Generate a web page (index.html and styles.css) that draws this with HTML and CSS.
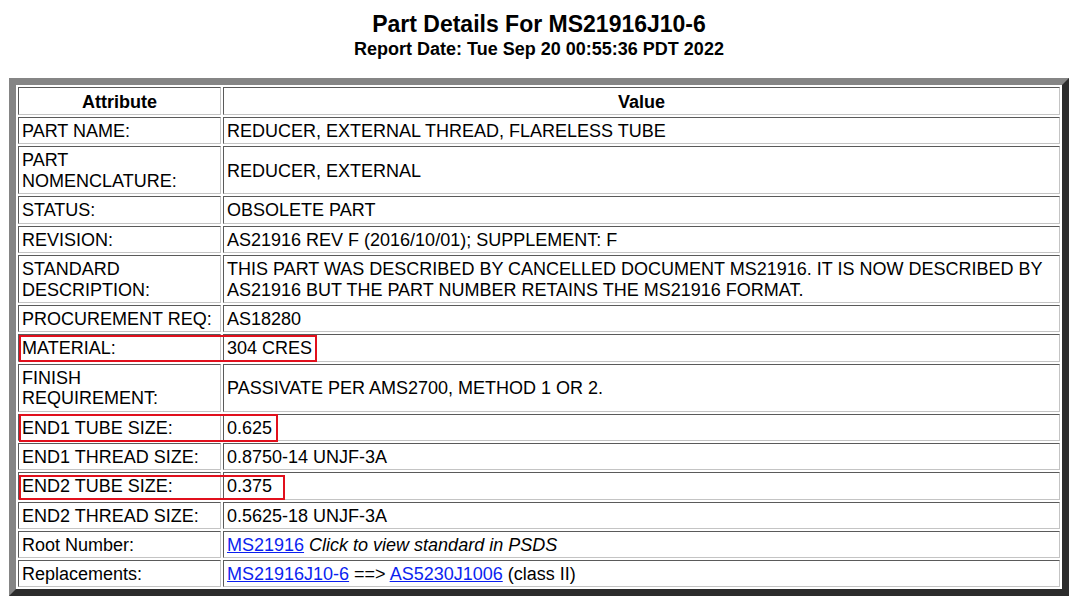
FILE: index.html
```html
<!DOCTYPE html>
<html>
<head>
<meta charset="utf-8">
<title>Part Details For MS21916J10-6</title>
<link rel="stylesheet" href="styles.css">
</head>
<body>
<div class="page">
  <h1 class="title">Part Details For MS21916J10-6</h1>
  <p class="date">Report Date: Tue Sep 20 00:55:36 PDT 2022</p>
  <div class="wrap">
    <table class="details">
      <tr><th class="c1">Attribute</th><th>Value</th></tr>
      <tr><td class="c1">PART NAME:</td><td>REDUCER, EXTERNAL THREAD, FLARELESS TUBE</td></tr>
      <tr><td class="c1">PART<br>NOMENCLATURE:</td><td>REDUCER, EXTERNAL</td></tr>
      <tr><td class="c1">STATUS:</td><td>OBSOLETE PART</td></tr>
      <tr><td class="c1">REVISION:</td><td>AS21916 REV F (2016/10/01); SUPPLEMENT: F</td></tr>
      <tr><td class="c1">STANDARD<br>DESCRIPTION:</td><td>THIS PART WAS DESCRIBED BY CANCELLED DOCUMENT MS21916. IT IS NOW DESCRIBED BY AS21916 BUT THE PART NUMBER RETAINS THE MS21916 FORMAT.</td></tr>
      <tr><td class="c1">PROCUREMENT REQ:</td><td>AS18280</td></tr>
      <tr><td class="c1">MATERIAL:</td><td>304 CRES</td></tr>
      <tr><td class="c1">FINISH<br>REQUIREMENT:</td><td>PASSIVATE PER AMS2700, METHOD 1 OR 2.</td></tr>
      <tr><td class="c1">END1 TUBE SIZE:</td><td>0.625</td></tr>
      <tr><td class="c1">END1 THREAD SIZE:</td><td>0.8750-14 UNJF-3A</td></tr>
      <tr><td class="c1">END2 TUBE SIZE:</td><td>0.375</td></tr>
      <tr><td class="c1">END2 THREAD SIZE:</td><td>0.5625-18 UNJF-3A</td></tr>
      <tr><td class="c1">Root Number:</td><td><a href="#">MS21916</a> <i>Click to view standard in PSDS</i></td></tr>
      <tr><td class="c1">Replacements:</td><td><a href="#">MS21916J10-6</a> ==&gt; <a href="#">AS5230J1006</a> (class II)</td></tr>
    </table>
    <div class="mark mark-material"></div>
    <div class="mark mark-end1"></div>
    <div class="mark mark-end2"></div>
  </div>
</div>
</body>
</html>
```
FILE: styles.css
```css
html, body {
  margin: 0;
  padding: 0;
  background: #ffffff;
}
body {
  font-family: "Liberation Sans", Arial, sans-serif;
  color: #000;
}
.page {
  padding: 11px 0 0 9px;
  width: 1060px;
}
.title {
  margin: 0;
  font-size: 23px;
  font-weight: bold;
  text-align: center;
  line-height: 26.4px;
}
.date {
  margin: 1.4px 0 18.8px;
  font-size: 18px;
  font-weight: bold;
  text-align: center;
  line-height: 20.7px;
}
.wrap {
  position: relative;
  width: 1060px;
}
.details {
  width: 1060px;
  border-collapse: separate;
  border-spacing: 2px;
  border-style: solid;
  border-width: 7px;
  border-color: #858585 #2c2c2c #2c2c2c #858585;
  font-size: 18px;
  line-height: 20.7px;
}
.details th,
.details td {
  border: 1px solid;
  border-color: #5a5a5a #c4c4c4 #c4c4c4 #5a5a5a;
  padding: 3px 3px 1.6px;
  text-align: left;
  vertical-align: middle;
}
.details th {
  text-align: center;
  font-weight: bold;
  padding-top: 3.6px;
}
.details .c1 {
  width: 203px;
  box-sizing: border-box;
}
.details a {
  color: #0b1ff0;
  text-decoration: underline;
}
.mark {
  position: absolute;
  border: 2px solid #e1101d;
  box-sizing: border-box;
}
.mark-material {
  left: 10px;
  top: 257px;
  width: 298px;
  height: 27px;
}
.mark-end1 {
  left: 10px;
  top: 336px;
  width: 259px;
  height: 28px;
}
.mark-end2 {
  left: 10px;
  top: 397px;
  width: 266px;
  height: 25px;
}
```
